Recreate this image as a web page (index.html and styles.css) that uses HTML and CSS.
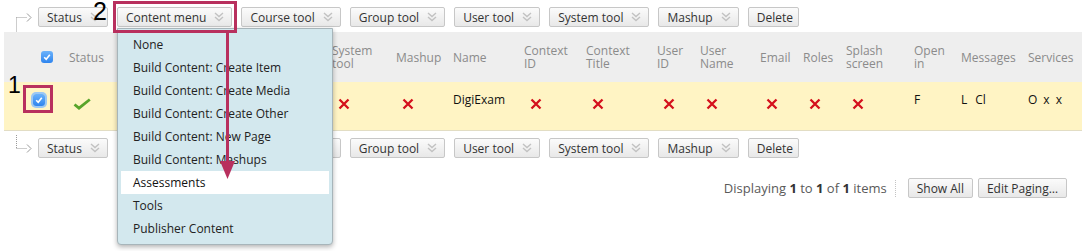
FILE: index.html
```html
<!DOCTYPE html>
<html>
<head>
<meta charset="utf-8">
<link rel="stylesheet" href="styles.css">
</head>
<body>
<div class="page">
  <div class="toolbar toolbar-top">
    <svg class="tree" viewBox="0 0 17 20"><path class="dots" d="M1.5 5.5V20M1.5 5.5H12"/><path class="tip" d="M12 1.5L16 5.5L12 9.5"/></svg>
    <div class="btns">
      <span class="btn">Status<svg class="chev" viewBox="0 0 10 10"><path d="M1 1L5 4.5L9 1M1 5L5 8.5L9 5"/></svg></span>
      <span class="btn">Content menu<svg class="chev" viewBox="0 0 10 10"><path d="M1 1L5 4.5L9 1M1 5L5 8.5L9 5"/></svg></span>
      <span class="btn">Course tool<svg class="chev" viewBox="0 0 10 10"><path d="M1 1L5 4.5L9 1M1 5L5 8.5L9 5"/></svg></span>
      <span class="btn">Group tool<svg class="chev" viewBox="0 0 10 10"><path d="M1 1L5 4.5L9 1M1 5L5 8.5L9 5"/></svg></span>
      <span class="btn">User tool<svg class="chev" viewBox="0 0 10 10"><path d="M1 1L5 4.5L9 1M1 5L5 8.5L9 5"/></svg></span>
      <span class="btn">System tool<svg class="chev" viewBox="0 0 10 10"><path d="M1 1L5 4.5L9 1M1 5L5 8.5L9 5"/></svg></span>
      <span class="btn">Mashup<svg class="chev" viewBox="0 0 10 10"><path d="M1 1L5 4.5L9 1M1 5L5 8.5L9 5"/></svg></span>
      <span class="btn plain">Delete</span>
    </div>
  </div>

  <div class="grid head">
    <div class="c-cb"><span class="cbox"><svg viewBox="0 0 12 12"><path d="M3.2 6.3L5.2 8.3L8.8 3.8"/></svg></span></div>
    <div>Status</div>
    <div></div>
    <div>System<br>tool</div>
    <div>Mashup</div>
    <div>Name</div>
    <div>Context<br>ID</div>
    <div>Context<br>Title</div>
    <div>User<br>ID</div>
    <div>User<br>Name</div>
    <div>Email</div>
    <div>Roles</div>
    <div>Splash<br>screen</div>
    <div>Open<br>in</div>
    <div>Messages</div>
    <div>Services</div>
  </div>

  <div class="grid row">
    <div class="c-cb"><span class="cbox focus"><svg viewBox="0 0 12 12"><path d="M3.2 6.3L5.2 8.3L8.8 3.8"/></svg></span></div>
    <div class="c-ok"><svg class="ok" viewBox="0 0 18 12"><path d="M1.5 6.5L6 10.2L16.8 1.5"/></svg></div>
    <div></div>
    <div><svg class="x" viewBox="0 0 12 12"><path d="M1.5 1.5L10.5 10.5M10.5 1.5L1.5 10.5"/></svg></div>
    <div><svg class="x" viewBox="0 0 12 12"><path d="M1.5 1.5L10.5 10.5M10.5 1.5L1.5 10.5"/></svg></div>
    <div class="txt">DigiExam</div>
    <div><svg class="x" viewBox="0 0 12 12"><path d="M1.5 1.5L10.5 10.5M10.5 1.5L1.5 10.5"/></svg></div>
    <div><svg class="x" viewBox="0 0 12 12"><path d="M1.5 1.5L10.5 10.5M10.5 1.5L1.5 10.5"/></svg></div>
    <div><svg class="x" viewBox="0 0 12 12"><path d="M1.5 1.5L10.5 10.5M10.5 1.5L1.5 10.5"/></svg></div>
    <div><svg class="x" viewBox="0 0 12 12"><path d="M1.5 1.5L10.5 10.5M10.5 1.5L1.5 10.5"/></svg></div>
    <div><svg class="x" viewBox="0 0 12 12"><path d="M1.5 1.5L10.5 10.5M10.5 1.5L1.5 10.5"/></svg></div>
    <div><svg class="x" viewBox="0 0 12 12"><path d="M1.5 1.5L10.5 10.5M10.5 1.5L1.5 10.5"/></svg></div>
    <div><svg class="x" viewBox="0 0 12 12"><path d="M1.5 1.5L10.5 10.5M10.5 1.5L1.5 10.5"/></svg></div>
    <div class="txt">F</div>
    <div class="txt flags"><span>L</span><span>Cl</span></div>
    <div class="txt flags svc"><span>O</span><span>x</span><span>x</span></div>
  </div>

  <div class="toolbar toolbar-bottom">
    <svg class="tree" viewBox="0 0 17 20"><path class="dots" d="M1.5 2V15.5M1.5 15.5H12"/><path class="tip" d="M12 11.5L16 15.5L12 19.5"/></svg>
    <div class="btns">
      <span class="btn">Status<svg class="chev" viewBox="0 0 10 10"><path d="M1 1L5 4.5L9 1M1 5L5 8.5L9 5"/></svg></span>
      <span class="btn covered">Content menu<svg class="chev" viewBox="0 0 10 10"><path d="M1 1L5 4.5L9 1M1 5L5 8.5L9 5"/></svg></span>
      <span class="btn covered">Course tool<svg class="chev" viewBox="0 0 10 10"><path d="M1 1L5 4.5L9 1M1 5L5 8.5L9 5"/></svg></span>
      <span class="btn">Group tool<svg class="chev" viewBox="0 0 10 10"><path d="M1 1L5 4.5L9 1M1 5L5 8.5L9 5"/></svg></span>
      <span class="btn">User tool<svg class="chev" viewBox="0 0 10 10"><path d="M1 1L5 4.5L9 1M1 5L5 8.5L9 5"/></svg></span>
      <span class="btn">System tool<svg class="chev" viewBox="0 0 10 10"><path d="M1 1L5 4.5L9 1M1 5L5 8.5L9 5"/></svg></span>
      <span class="btn">Mashup<svg class="chev" viewBox="0 0 10 10"><path d="M1 1L5 4.5L9 1M1 5L5 8.5L9 5"/></svg></span>
      <span class="btn plain">Delete</span>
    </div>
  </div>

  <div class="paging">
    <span class="count">Displaying <b>1</b> to <b>1</b> of <b>1</b> items</span>
    <span class="sep"></span>
    <span class="pbtn">Show All</span>
    <span class="pbtn">Edit Paging…</span>
  </div>

  <ul class="menu">
    <li>None</li>
    <li>Build Content: Create Item</li>
    <li>Build Content: Create Media</li>
    <li>Build Content: Create Other</li>
    <li>Build Content: New Page</li>
    <li>Build Content: Mashups</li>
    <li class="sel">Assessments</li>
    <li>Tools</li>
    <li>Publisher Content</li>
  </ul>

  <div class="mark mark-menu"></div>
  <div class="mark mark-cb"></div>
  <div class="label label-2">2</div>
  <div class="label label-1">1</div>
  <svg class="arrow" viewBox="0 0 20 150"><path class="shaft" d="M9.5 0V132"/><path class="head" d="M2 128H17L9.5 146Z"/></svg>
</div>
</body>
</html>
```

FILE: styles.css
```css
html, body {
  margin: 0;
  background: #fff;
  overflow: hidden;
}
body {
  font-family: "Open Sans", "Noto Sans", sans-serif;
  font-size: 12px;
  color: #222;
}
.page {
  position: relative;
  width: 1082px;
  height: 251px;
  padding-top: 7px;
  box-sizing: border-box;
}

/* toolbars */
.toolbar {
  display: flex;
  align-items: flex-start;
  height: 20px;
  padding-left: 15px;
}
.toolbar-bottom { margin-top: 7px; }
.tree {
  flex: none;
  width: 17px;
  height: 20px;
  margin-right: 6px;
}
.toolbar-top .tree { margin-top: 5px; }
.toolbar-bottom .tree { margin-top: -5px; }
.tree .dots {
  fill: none;
  stroke: #9a9a9a;
  stroke-width: 1;
  stroke-dasharray: 1 1;
}
.tree .tip {
  fill: none;
  stroke: #9a9a9a;
  stroke-width: 1;
}
.btns {
  display: flex;
  gap: 9px;
}
.btn, .pbtn {
  display: flex;
  align-items: center;
  height: 20px;
  box-sizing: border-box;
  border: 1px solid #c7c7c7;
  border-radius: 2px;
  background: linear-gradient(#fbfbfb, #e8e8e8);
  color: #333;
  white-space: nowrap;
}
.btn { padding: 0 7px 0 8px; }
.btn.plain { padding: 0 5px 0 8px; }
.btn.covered { color: transparent; }
.chev {
  width: 10px;
  height: 10px;
  margin-left: 8px;
}
.chev path {
  fill: none;
  stroke: #c2c2c2;
  stroke-width: 1.4;
}

/* table */
.grid {
  display: grid;
  grid-template-columns: 59px 47px 216px 64px 57px 71px 62px 71px 43px 60px 43px 43px 68px 47px 67px 1fr;
  margin-left: 4px;
}
.head {
  margin-top: 5px;
  height: 50px;
  background: #eeeeee;
  color: #8b8b8b;
  align-items: center;
  line-height: 13px;
}
.head > div { padding-left: 6px; }
.head .c-cb { padding-left: 37px; }
.row {
  height: 49px;
  box-sizing: border-box;
  background: #fff4c4;
  border-bottom: 1px solid #e2ddc4;
  align-items: start;
  color: #111;
}
.row > div {
  padding-left: 6px;
  padding-top: 10px;
  line-height: 16px;
}
.row .c-cb { padding-left: 29px; padding-top: 12px; }
.row .c-ok { padding-left: 10px; }
.cbox {
  display: block;
  width: 12px;
  height: 12px;
  border-radius: 3px;
  background: linear-gradient(#6cb3fb, #2e84ee);
}
.cbox svg { display: block; width: 12px; height: 12px; }
.cbox path {
  fill: none;
  stroke: #fff;
  stroke-width: 1.6;
}
.cbox.focus { box-shadow: 0 0 0 2px #9cc8f4; }
.ok {
  display: block;
  width: 18px;
  height: 12px;
  margin-top: 6px;
}
.ok path {
  fill: none;
  stroke: #58a42a;
  stroke-width: 2.8;
}
.x {
  display: block;
  width: 12px;
  height: 12px;
  margin-left: 6px;
  margin-top: 6px;
}
.x path {
  fill: none;
  stroke: #d4101c;
  stroke-width: 2.3;
}
.flags { display: flex; gap: 8px; }
.flags.svc { gap: 6px; }

/* paging */
.paging {
  display: flex;
  justify-content: flex-end;
  align-items: center;
  height: 20px;
  margin-top: 20px;
  padding-right: 15px;
}
.count {
  font-size: 13px;
  color: #5a5a5a;
}
.count b { color: #333; }
.sep {
  height: 17px;
  border-left: 1px dotted #c4c4c4;
  margin: 0 12px 0 8px;
}
.pbtn { padding: 0 8px; }
.pbtn + .pbtn { margin-left: 5px; }

/* dropdown menu (overlay) */
.menu {
  position: absolute;
  left: 117px;
  top: 28px;
  width: 216px;
  margin: 0;
  padding: 4px 3px;
  box-sizing: border-box;
  list-style: none;
  background: #d3e8ee;
  border: 1px solid #a7b5ba;
  border-radius: 0 0 4px 4px;
  box-shadow: 0 2px 5px rgba(0, 0, 0, 0.3);
  color: #222;
  z-index: 2;
}
.menu li {
  height: 23px;
  line-height: 23px;
  padding-left: 12px;
  white-space: nowrap;
}
.menu .sel { background: #fff; color: #111; }

/* annotations (overlay) */
.mark {
  position: absolute;
  box-sizing: border-box;
  border: 3px solid #b8305e;
  z-index: 3;
}
.mark-menu { left: 113px; top: 1px; width: 124px; height: 32px; }
.mark-cb { left: 23px; top: 85px; width: 30px; height: 28px; }
.label {
  position: absolute;
  font-family: "Liberation Sans", Arial, sans-serif;
  color: #000;
  z-index: 3;
}
.label-2 { left: 93px; top: 0; font-size: 25px; line-height: 23px; }
.label-1 { left: 8px; top: 74px; font-size: 23px; line-height: 22px; }
.arrow {
  position: absolute;
  left: 218px;
  top: 33px;
  width: 20px;
  height: 150px;
  z-index: 3;
}
.arrow .shaft { stroke: #b8305e; stroke-width: 3; fill: none; }
.arrow .head { fill: #b8305e; }
```
